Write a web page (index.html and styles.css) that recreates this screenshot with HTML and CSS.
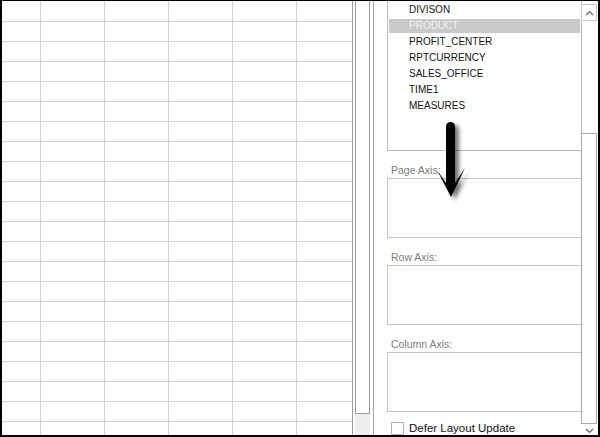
FILE: index.html
```html
<!DOCTYPE html>
<html>
<head>
<meta charset="utf-8">
<link rel="stylesheet" href="styles.css">
</head>
<body>
<div class="window">
  <div class="sheet">
    <div class="row"></div><div class="row"></div><div class="row"></div><div class="row"></div>
    <div class="row"></div><div class="row"></div><div class="row"></div><div class="row"></div>
    <div class="row"></div><div class="row"></div><div class="row"></div><div class="row"></div>
    <div class="row"></div><div class="row"></div><div class="row"></div><div class="row"></div>
    <div class="row"></div><div class="row"></div><div class="row"></div><div class="row"></div>
    <div class="row"></div><div class="row"></div>
  </div>
  <div class="vscroll">
    <div class="vthumb"></div>
    <div class="vtrack"></div>
  </div>
  <aside class="panel">
    <div class="panel-main">
      <ul class="fieldlist">
        <li>DIVISON</li>
        <li class="selected">PRODUCT</li>
        <li>PROFIT_CENTER</li>
        <li>RPTCURRENCY</li>
        <li>SALES_OFFICE</li>
        <li>TIME1</li>
        <li>MEASURES</li>
      </ul>
      <div class="area-label">Page Axis:</div>
      <div class="area-box"></div>
      <div class="area-label">Row Axis:</div>
      <div class="area-box"></div>
      <div class="area-label">Column Axis:</div>
      <div class="area-box"></div>
      <label class="defer"><span class="checkbox"></span>Defer Layout Update</label>
    </div>
    <div class="pscroll">
      <div class="pbtn up">
        <svg width="9" height="6" viewBox="0 0 9 6"><polyline points="1,5 4.5,1.5 8,5" fill="none" stroke="#666" stroke-width="1.2"/></svg>
      </div>
      <div class="ptrack"></div>
      <div class="pthumb"></div>
      <div class="pbtn down">
        <svg width="9" height="6" viewBox="0 0 9 6"><polyline points="1,1 4.5,4.5 8,1" fill="none" stroke="#666" stroke-width="1.2"/></svg>
      </div>
    </div>
  </aside>
  <svg class="arrow" width="50" height="95" viewBox="428 115 50 95">
    <defs>
      <filter id="sh" x="-50%" y="-20%" width="200%" height="150%">
        <feGaussianBlur in="SourceAlpha" stdDeviation="2"/>
        <feOffset dx="4" dy="3" result="b"/>
        <feComponentTransfer><feFuncA type="linear" slope="0.55"/></feComponentTransfer>
        <feMerge><feMergeNode/><feMergeNode in="SourceGraphic"/></feMerge>
      </filter>
    </defs>
    <path d="M446,126.5 A4.5,4.5 0 0 1 455,126.5 L455,183 L465,168 L451,197 L437,170 L446,183 Z" fill="#000" filter="url(#sh)"/>
  </svg>
</div>
</body>
</html>
```
FILE: styles.css
```css
* { box-sizing: border-box; }
html, body { margin: 0; padding: 0; background: #fff; }

.window {
  position: relative;
  width: 600px;
  height: 437px;
  border-style: solid;
  border-color: #000;
  border-width: 1px 2px 2px 2px;
  display: flex;
  overflow: hidden;
  background: #fff;
  font-family: "Liberation Sans", Arial, sans-serif;
}

/* spreadsheet grid */
.sheet {
  width: 351px;
  flex: none;
  border-right: 1px solid #9a9a9a;
  background-image: linear-gradient(to right, #d2d2d2 0, #d2d2d2 1px, transparent 1px);
  background-size: 64px 100%;
  background-position: 38px 0;
  background-repeat: repeat-x;
  display: flex;
  flex-direction: column;
}
.row {
  flex: none;
  height: 20px;
  border-bottom: 1px solid #d2d2d2;
}
.row:first-child { height: 21px; }

/* sheet scrollbar */
.vscroll {
  width: 21px;
  flex: none;
  border-right: 1px solid #a8a8a8;
  display: flex;
  flex-direction: column;
}
.vthumb {
  margin-left: 2px;
  width: 15px;
  height: 413px;
  border: 1px solid #9c9c9c;
  border-top: none;
}
.vtrack {
  margin-left: 2px;
  width: 15px;
  flex: 1;
  background: #eeeeee;
}

/* pivot field panel */
.panel {
  flex: 1;
  display: flex;
}
.panel-main {
  width: 208px;
  padding-left: 13px;
  display: flex;
  flex-direction: column;
}
.fieldlist {
  list-style: none;
  margin: 0;
  height: 150px;
  padding: 2px 1px 0 1px;
  border: 1px solid #b8b8b8;
  border-top: none;
  font-size: 10px;
  color: #111;
}
.fieldlist li {
  height: 14px;
  line-height: 14px;
  margin-bottom: 2px;
  padding-left: 20px;
  white-space: nowrap;
}
.fieldlist li.selected {
  background: #c9c9c9;
  color: #f2f2f2;
}
.area-label {
  height: 27px;
  display: flex;
  align-items: flex-end;
  padding: 0 0 1px 4px;
  font-size: 10.5px;
  line-height: 13px;
  color: #7c7c7c;
}
.area-box {
  height: 60px;
  border: 1px solid #c4c4c4;
}
.defer {
  display: flex;
  align-items: center;
  margin-top: 10px;
  padding-left: 4px;
  font-size: 11.5px;
  line-height: 13px;
  color: #111;
}
.checkbox {
  width: 13px;
  height: 13px;
  margin-right: 5px;
  border: 1px solid #b4b4b4;
  flex: none;
}

/* panel scrollbar */
.pscroll {
  width: 16px;
  margin-left: -1px;
  padding-top: 3px;
  display: flex;
  flex-direction: column;
}
.pbtn {
  display: flex;
  align-items: center;
  justify-content: center;
}
.pbtn.up {
  height: 17px;
  border: 1px solid #c8c8c8;
}
.ptrack { height: 112px; }
.pthumb {
  height: 291px;
  border: 1px solid #a8a8a8;
}
.pbtn.down {
  flex: 1;
  align-items: flex-end;
  padding-bottom: 1px;
}

/* annotation arrow over the panel */
.arrow {
  position: absolute;
  left: 426px;
  top: 114px;
}
```
